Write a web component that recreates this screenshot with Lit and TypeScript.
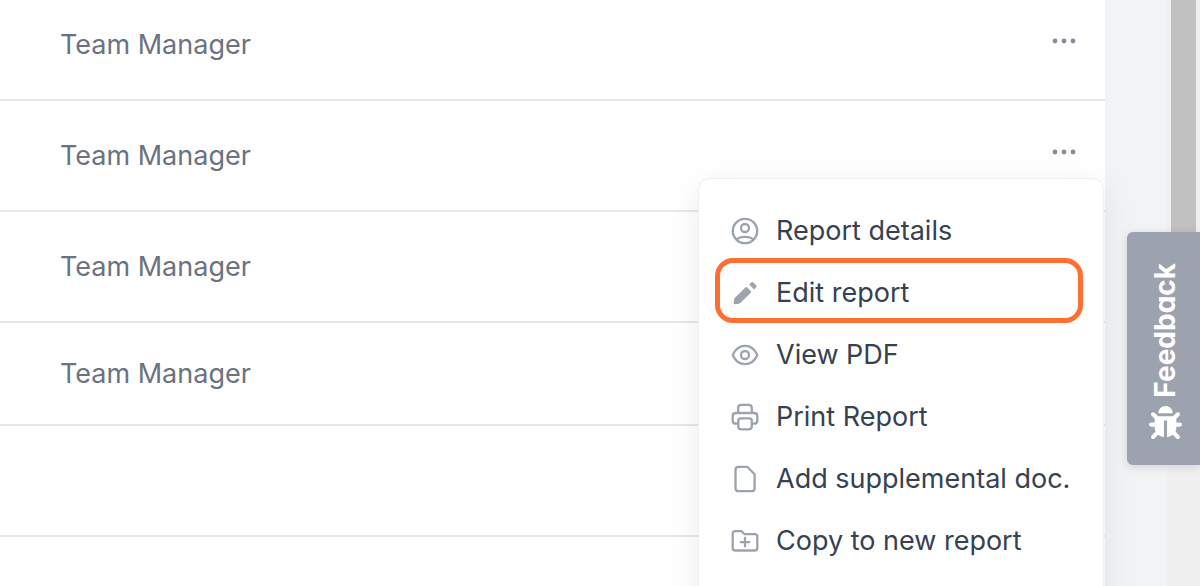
import { LitElement, html, css, svg, nothing, type TemplateResult } from "lit";
import { customElement, property } from "lit/decorators.js";

type MenuEntry = { label: string; icon: TemplateResult; highlighted?: boolean };

const stroked = (content: TemplateResult) => svg`
  <g fill="none" stroke="currentColor" stroke-width="2.300" stroke-linecap="round" stroke-linejoin="round">${content}</g>`;

const MENU: MenuEntry[] = [
  {
    label: "Report details",
    icon: stroked(svg`
      <circle cx="14" cy="14" r="12.200"/>
      <circle cx="14" cy="11" r="4"/>
      <path d="M5.800 22.400C7.600 20.600 10.400 19.800 14 19.800s6.400 .8 8.200 2.600"/>`),
  },
  {
    label: "Edit report",
    highlighted: true,
    icon: svg`
      <path fill="currentColor" d="M14.400 8.500Q15.300 7.700 16.200 8.500L19.800 12Q20.600 12.900 19.800 13.800L9.600 23.800Q8.800 24.500 7.800 24.700L4.200 25.300Q2.500 25.400 2.600 23.700L3.200 20.400Q3.400 19.400 4.200 18.600Z"/>
      <path fill="currentColor" d="M18.200 5.600 20.300 3.500Q21.300 2.600 22.300 3.500L25.200 6.300Q26.100 7.300 25.200 8.200L23.100 10.400Z"/>`,
  },
  {
    label: "View PDF",
    icon: stroked(svg`
      <path d="M1.700 14C4.200 8.200 8.600 4.800 14 4.800S23.800 8.200 26.300 14C23.800 19.800 19.400 23.200 14 23.200S4.200 19.800 1.700 14Z"/>
      <circle cx="14" cy="14" r="4"/>`),
  },
  {
    label: "Print Report",
    icon: stroked(svg`
      <path d="M7.200 10V5Q7.200 1.800 10.200 1.800H17.800Q20.800 1.800 20.800 5V10"/>
      <path d="M7.200 20.700H5Q1.700 20.700 1.700 17.400V13.300Q1.700 10 5 10H23Q26.300 10 26.300 13.300V17.400Q26.300 20.700 23 20.700H20.800"/>
      <path d="M9.600 15.300H18.400Q20.800 15.300 20.800 17.700V23Q20.800 26.300 17.800 26.300H10.200Q7.200 26.300 7.200 23V17.700Q7.200 15.300 9.600 15.300Z"/>`),
  },
  {
    label: "Add supplemental doc.",
    icon: stroked(svg`
      <path d="M7.500 1.800H16.200L23.600 9.200V23.200Q23.600 26.200 20.600 26.200H7.500Q4.500 26.200 4.500 23.200V4.800Q4.500 1.800 7.500 1.800Z"/>`),
  },
  {
    label: "Copy to new report",
    icon: stroked(svg`
      <path d="M4.300 4.200H10.600L13.600 7.200H23.700Q26.300 7.200 26.300 9.800V20.900Q26.300 23.500 23.700 23.500H4.300Q1.700 23.500 1.700 20.900V6.800Q1.700 4.200 4.300 4.200Z"/>
      <path d="M14 10.800V19.400M9.700 15.100H18.300"/>`),
  },
];

@customElement("report-menu")
export class ReportMenu extends LitElement {
  @property({ attribute: false }) entries: MenuEntry[] = [];

  static styles = css`
    :host {
      display: block;
      box-sizing: border-box;
      padding: 21px 20px 48px 16px;
      background: #fff;
      border: 1px solid #eeeff1;
      border-radius: 12px;
      box-shadow: 0 8px 32px rgba(17, 24, 39, 0.08);
    }
    .item {
      position: relative;
      display: flex;
      align-items: center;
      gap: 17px;
      width: 100%;
      height: 62px;
      padding: 0 8px 0 16px;
      border: 0;
      background: none;
      color: #374151;
      font: 400 27px/32px Inter, sans-serif;
      text-align: left;
      white-space: nowrap;
      cursor: pointer;
    }
    .highlighted::after {
      content: "";
      position: absolute;
      inset: -4px 0 1px;
      border: 5px solid #ff6f31;
      border-radius: 18px;
    }
    .icon {
      flex: none;
      width: 28px;
      height: 28px;
      color: #9ca3af;
    }
  `;

  render() {
    return this.entries.map(
      (entry) => html`
        <button type="button" class="item ${entry.highlighted ? "highlighted" : ""}">
          <svg class="icon" viewBox="0 0 28 28" aria-hidden="true">${entry.icon}</svg>
          <span>${entry.label}</span>
        </button>
      `
    );
  }
}

type Row = { role: string; size: string; actions?: boolean; menuOpen?: boolean };

const ROWS: Row[] = [
  { role: "Team Manager", size: "tall", actions: true },
  { role: "Team Manager", size: "tall", actions: true, menuOpen: true },
  { role: "Team Manager", size: "tall" },
  { role: "Team Manager", size: "short" },
  { role: "", size: "tall" },
  { role: "", size: "tall" },
];

@customElement("app-root")
export class AppRoot extends LitElement {
  static styles = css`
    :host {
      position: relative;
      display: grid;
      grid-template-columns: minmax(0, 1fr) 62px 33px;
      height: 100vh;
      overflow: hidden;
      background: #f2f3f5;
      font-family: Inter, sans-serif;
    }
    .list {
      min-width: 0;
      background: #fff;
    }
    .table {
      width: 100%;
      margin-top: -10px;
      border-collapse: separate;
      border-spacing: 0;
    }
    .cell {
      padding: 0;
      border-bottom: 2px solid #e5e7eb;
      color: #6b7280;
      font-size: 27px;
      line-height: 32px;
    }
    .tall {
      height: 111px;
    }
    .short {
      height: 103px;
    }
    .role {
      padding-left: 60px;
    }
    .actions {
      position: relative;
      width: 80px;
    }
    .more {
      display: block;
      width: 44px;
      height: 32px;
      margin: 0 0 8px 17px;
      padding: 0;
      border: 0;
      background: none;
      color: #858d9b;
      cursor: pointer;
    }
    .dots {
      display: block;
      width: 44px;
      height: 32px;
    }
    .menu {
      position: absolute;
      z-index: 1;
      top: 77px;
      right: 1px;
      width: 406px;
    }
    .track {
      grid-column: 3;
      padding: 0 4px;
      background: #f0f0f0;
    }
    .thumb {
      height: 60%;
      background: #c1c1c1;
    }
    .feedback {
      position: absolute;
      z-index: 2;
      top: 232px;
      right: 0;
      display: flex;
      flex-direction: column;
      align-items: center;
      gap: 8px;
      padding: 31px 18px 26px 22px;
      border: 0;
      border-radius: 6px 0 0 6px;
      background: #9ca3af;
      box-shadow: 0 2px 10px rgba(17, 24, 39, 0.14);
      color: #fff;
      font: 700 28px/33px Inter, sans-serif;
      font-feature-settings: "cv11";
      cursor: pointer;
    }
    .feedback-label {
      writing-mode: vertical-rl;
      transform: rotate(180deg);
    }
    .bug {
      width: 33px;
      height: 33px;
    }
  `;

  private renderRow(row: Row) {
    return html`
      <tr class=${row.size}>
        <td class="cell role">${row.role}</td>
        <td class="cell actions">
          ${row.actions
            ? html`<button type="button" class="more" aria-label="Report actions">
                <svg class="dots" viewBox="0 0 44 32" fill="currentColor" aria-hidden="true">
                  <circle cx="13" cy="16" r="2.400" />
                  <circle cx="22" cy="16" r="2.400" />
                  <circle cx="31" cy="16" r="2.400" />
                </svg>
              </button>`
            : nothing}
          ${row.menuOpen ? html`<report-menu class="menu" .entries=${MENU}></report-menu>` : nothing}
        </td>
      </tr>
    `;
  }

  render() {
    return html`
      <main class="list">
        <table class="table">
          <tbody>
            ${ROWS.map((row) => this.renderRow(row))}
          </tbody>
        </table>
      </main>
      <div class="track"><div class="thumb"></div></div>
      <button type="button" class="feedback">
        <span class="feedback-label">Feedback</span>
        <svg class="bug" viewBox="0 0 512 512" fill="currentColor" aria-hidden="true">
          <path
            d="M511.988 288.900c-.478 17.430-15.217 31.100-32.653 31.100H424v16c0 21.864-4.882 42.584-13.600 61.145l60.228 60.228c12.496 12.497 12.496 32.758 0 45.255-12.498 12.497-32.759 12.496-45.256 0l-54.736-54.736C345.886 467.965 314.351 480 280 480V236c0-6.627-5.373-12-12-12h-24c-6.627 0-12 5.373-12 12v244c-34.351 0-65.886-12.035-90.636-32.108l-54.736 54.736c-12.498 12.497-32.759 12.496-45.256 0-12.496-12.497-12.496-32.758 0-45.255l60.228-60.228C92.882 378.584 88 357.864 88 336v-16H32.666C15.230 320 .491 306.330.013 288.900-.484 270.816 14.028 256 32 256h56v-58.745l-46.628-46.628c-12.496-12.497-12.496-32.758 0-45.255 12.498-12.497 32.758-12.497 45.256 0L141.255 160h229.489l54.627-54.627c12.498-12.497 32.758-12.497 45.256 0 12.496 12.497 12.496 32.758 0 45.255L424 197.255V256h56c17.972 0 32.484 14.816 31.988 32.900zM257 0c-61.856 0-112 50.144-112 112h224C369 50.144 318.856 0 257 0z"
          />
        </svg>
      </button>
    `;
  }
}
